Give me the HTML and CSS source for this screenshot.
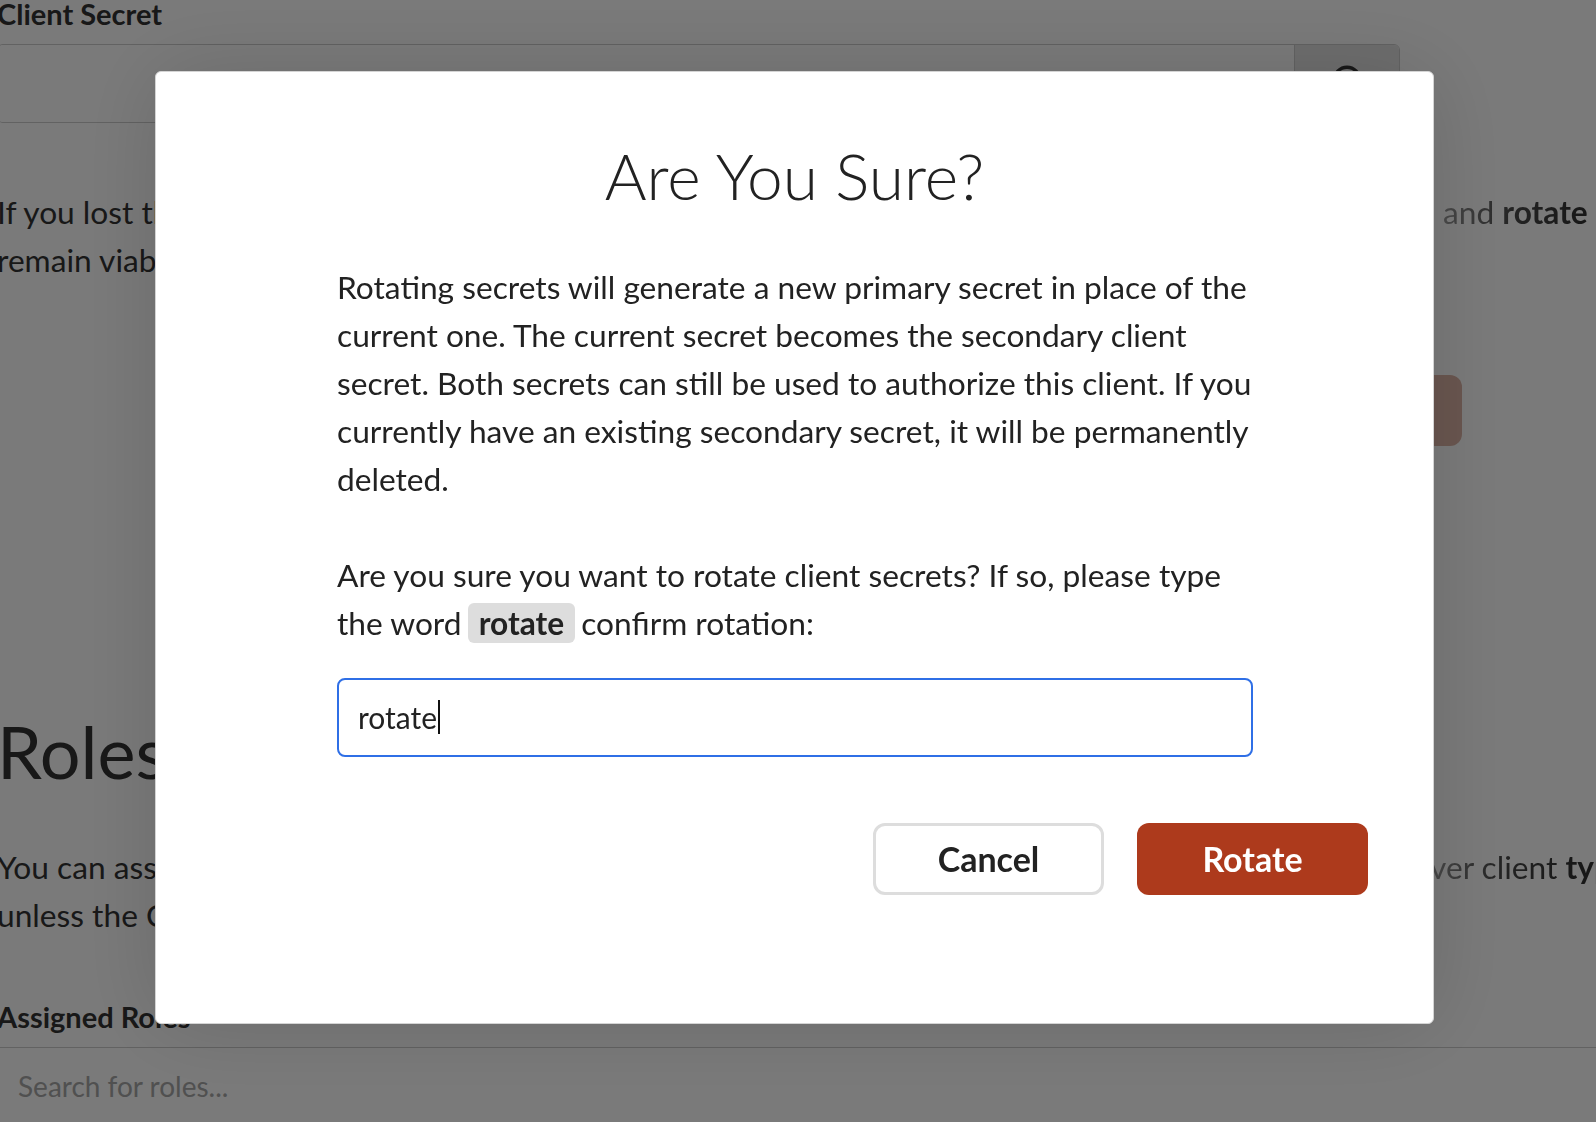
FILE: index.html
```html
<!DOCTYPE html>
<html lang="en">
<head>
    <meta charset="UTF-8">
    <meta name="viewport" content="width=device-width, initial-scale=1.0">
    <title>Client Secret - Rotate</title>
    <link rel="stylesheet" href="styles.css">
</head>
<body>
    <div class="page">
        <section class="secret-section">
            <label class="field-label">Client Secret</label>
            <div class="secret-field">
                <div class="secret-value"></div>
                <button class="secret-toggle" type="button" aria-label="Show secret">
                    <svg viewBox="0 0 24 24" width="34" height="34">
                        <circle cx="12" cy="12" r="9" fill="none" stroke="#333" stroke-width="2.4"/>
                    </svg>
                </button>
            </div>
            <p class="help-line">
                <span class="help-head">If you lost the client secret, or believe it has been compromised, you can generate a new one</span>
                <span class="help-tail">and <strong>rotate</strong> the secrets.</span>
            </p>
            <p class="help-line">
                <span class="help-head">remain viable until the secondary secret is removed by an administrator.</span>
            </p>
            <div class="secret-actions">
                <button class="btn-rotate-secret" type="button">Rotate Secrets</button>
            </div>
        </section>

        <section class="roles-section">
            <h2>Roles</h2>
            <p class="help-line">
                <span class="help-head help-head-short">You can assign roles to this client. Roles can be assigned to a Ser</span>
                <span class="help-tail">ver client <strong>type</strong></span>
            </p>
            <p class="help-line">
                <span class="help-head">unless the Client is disabled.</span>
            </p>
            <label class="field-label roles-label">Assigned Roles</label>
            <div class="roles-search">Search for roles...</div>
        </section>
    </div>

    <div class="overlay">
        <div class="modal" role="dialog" aria-labelledby="modalTitle">
            <h1 id="modalTitle">Are You Sure?</h1>
            <div class="modal-body">
                <p>Rotating secrets will generate a new primary secret in place of the current one. The current secret becomes the secondary client secret. Both secrets can still be used to authorize this client. If you currently have an existing secondary secret, it will be permanently deleted.</p>
                <p class="confirm-text">Are you sure you want to rotate client secrets? If so, please type the word <code class="keyword">rotate</code> confirm rotation:</p>
                <div class="confirm-input" role="textbox">rotate<span class="caret"></span></div>
            </div>
            <div class="modal-footer">
                <button class="btn btn-cancel" type="button">Cancel</button>
                <button class="btn btn-rotate" type="button">Rotate</button>
            </div>
        </div>
    </div>
</body>
</html>
```

FILE: styles.css
```css
:root {
    --text-color: #222222;
    --page-text: #333333;
    --danger-color: #ad3a1c;
    --focus-color: #2f6fe6;
    --chip-background: #dddddd;
    --border-color: #cccccc;
}

* {
    box-sizing: border-box;
    margin: 0;
    padding: 0;
}

body {
    font-family: 'Lato', 'Open Sans', sans-serif;
    color: var(--page-text);
    background-color: #ffffff;
    width: 1596px;
    height: 1122px;
    overflow: hidden;
}

/* Background page */
.page {
    width: 1465px;
    margin-left: -3px;
}

.field-label {
    display: block;
    font-size: 29px;
    font-weight: bold;
    line-height: 1.1;
}

.secret-section .field-label {
    margin-top: -2px;
}

.secret-field {
    display: flex;
    width: 1403px;
    height: 79px;
    margin-top: 14px;
    border: 1px solid var(--border-color);
    border-radius: 6px;
    overflow: hidden;
}

.secret-value {
    flex: 1;
    background-color: #ffffff;
}

.secret-toggle {
    width: 105px;
    border: none;
    border-left: 1px solid var(--border-color);
    background-color: #e4e4e4;
    display: flex;
    justify-content: center;
    padding-top: 18px;
}

.help-line {
    display: flex;
    width: 1640px;
    font-size: 31.7px;
    line-height: 48px;
    white-space: nowrap;
    overflow: hidden;
}

.secret-field + .help-line {
    margin-top: 65px;
}

.help-head {
    flex: 0 0 1430px;
    margin-right: 16px;
    overflow: hidden;
}

.help-head-short {
    flex-basis: 1420px;
    margin-right: 13px;
}

.help-tail {
    background: linear-gradient(to right, #9a9a9a, #4a4a4a 70px, #333333 140px);
    -webkit-background-clip: text;
    background-clip: text;
    color: transparent;
}

.secret-actions {
    display: flex;
    justify-content: flex-end;
    margin-top: 91px;
}

.btn-rotate-secret {
    height: 71px;
    padding: 0 40px;
    border: none;
    border-radius: 12px;
    background-color: #dcb4a6;
    color: #ffffff;
    font-family: inherit;
    font-size: 30px;
    font-weight: bold;
}

.roles-section h2 {
    font-size: 72px;
    font-weight: normal;
    line-height: 1.2;
    margin-top: 262px;
    margin-bottom: 49px;
}

.roles-label {
    margin-top: 62px;
}

.roles-search {
    width: 1700px;
    margin-top: 14px;
    padding: 21px 21px;
    border-top: 1px solid var(--border-color);
    font-size: 28px;
    color: #a8a8a8;
}

/* Modal */
.overlay {
    position: fixed;
    inset: 0;
    background-color: rgba(0, 0, 0, 0.52);
    padding: 71px 0 0 155px;
}

.modal {
    width: 1279px;
    height: 953px;
    background-color: #ffffff;
    border: 1px solid #d4d4d4;
    border-radius: 6px;
    box-shadow: 0 0 90px rgba(0, 0, 0, 0.14);
    padding-top: 66px;
    color: var(--text-color);
}

.modal h1 {
    text-align: center;
    font-size: 64px;
    font-weight: 300;
    line-height: 1.2;
}

.modal-body {
    padding: 0 180px 0 181px;
    margin-top: 48px;
}

.modal-body p {
    font-size: 31.7px;
    line-height: 48px;
}

.modal-body .confirm-text {
    margin-top: 48px;
}

.keyword {
    display: inline-block;
    font-family: inherit;
    font-weight: bold;
    line-height: 40px;
    padding: 0 11px;
    margin: 0 -2px;
    background-color: var(--chip-background);
    border-radius: 6px;
}

.confirm-input {
    display: flex;
    align-items: center;
    height: 79px;
    margin-top: 31px;
    padding: 0 19px;
    border: 2px solid var(--focus-color);
    border-radius: 8px;
    font-size: 30px;
    color: var(--text-color);
}

.caret {
    display: inline-block;
    width: 2px;
    height: 34px;
    margin-left: 1px;
    background-color: #111111;
}

.modal-footer {
    display: flex;
    justify-content: flex-end;
    gap: 33px;
    margin-top: 66px;
    padding-right: 65px;
}

.btn {
    width: 231px;
    height: 72px;
    border-radius: 12px;
    font-family: inherit;
    font-size: 34px;
    font-weight: bold;
    cursor: pointer;
}

.btn-cancel {
    background-color: #ffffff;
    border: 3px solid #dddddd;
    color: var(--text-color);
}

.btn-rotate {
    background-color: var(--danger-color);
    border: none;
    color: #ffffff;
}
```
